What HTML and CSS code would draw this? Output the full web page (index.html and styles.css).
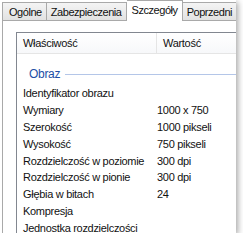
FILE: index.html
```html
<!DOCTYPE html>
<html lang="pl">
<head>
    <meta charset="UTF-8">
    <title>Właściwości</title>
    <link rel="stylesheet" href="styles.css">
</head>
<body>
    <div class="window">
        <div class="tabs">
            <div class="tab first">Ogólne</div>
            <div class="tab">Zabezpieczenia</div>
            <div class="tab selected">Szczegóły</div>
            <div class="tab">Poprzedni</div>
        </div>
        <div class="panel">
            <div class="list">
                <div class="list-header">
                    <div class="col name">Właściwość</div>
                    <div class="col value">Wartość</div>
                </div>
                <div class="group">
                    <span>Obraz</span>
                    <div class="group-line"></div>
                </div>
                <div class="row"><div class="name">Identyfikator obrazu</div><div class="value"></div></div>
                <div class="row"><div class="name">Wymiary</div><div class="value">1000 x 750</div></div>
                <div class="row"><div class="name">Szerokość</div><div class="value">1000 pikseli</div></div>
                <div class="row"><div class="name">Wysokość</div><div class="value">750 pikseli</div></div>
                <div class="row"><div class="name">Rozdzielczość w poziomie</div><div class="value">300 dpi</div></div>
                <div class="row"><div class="name">Rozdzielczość w pionie</div><div class="value">300 dpi</div></div>
                <div class="row"><div class="name">Głębia w bitach</div><div class="value">24</div></div>
                <div class="row"><div class="name">Kompresja</div><div class="value"></div></div>
                <div class="row"><div class="name">Jednostka rozdzielczości</div><div class="value"></div></div>
            </div>
        </div>
    </div>
</body>
</html>
```

FILE: styles.css
```css
body, html {
    margin: 0;
    padding: 0;
    background-color: #ffffff;
    font-family: "Liberation Sans", Arial, sans-serif;
    font-size: 11px;
    letter-spacing: -0.3px;
    color: #111111;
}
.window {
    width: 236px;
    height: 233px;
    overflow: hidden;
    background-color: #ffffff;
    box-shadow: 2px 2px 6px rgba(0, 0, 0, 0.35);
    display: flex;
    flex-direction: column;
}
.tabs {
    display: flex;
    align-items: flex-end;
    height: 21px;
    padding-left: 2px;
    flex-shrink: 0;
    position: relative;
    z-index: 1;
}
.tab {
    height: 17px;
    line-height: 18px;
    padding: 0 4px 0 4px;
    border: 1px solid #a9a9a9;
    border-bottom: none;
    border-left: none;
    background: linear-gradient(#f4f4f4, #e2e2e2);
    white-space: nowrap;
    letter-spacing: -0.45px;
    margin-bottom: 1px;
}
.tab.first {
    border-left: 1px solid #a9a9a9;
    padding: 0 4px 0 6px;
}
.tab.selected {
    height: 20px;
    line-height: 19px;
    padding: 0 4px 0 5px;
    background: #ffffff;
    margin-bottom: 0;
}
.panel {
    flex: 1;
    margin-left: 2px;
    margin-top: -1px;
    border-top: 1px solid #a9a9a9;
    border-left: 1px solid #a9a9a9;
    padding: 11px 0 0 13px;
    overflow: hidden;
}
.list {
    border-top: 1px solid #828790;
    border-left: 1px solid #828790;
    height: 300px;
}
.list-header {
    display: flex;
    height: 20px;
    border-bottom: 1px solid #e5e5e5;
    background: linear-gradient(#ffffff, #f7f8fa);
}
.list-header .col {
    line-height: 20px;
    padding-left: 6px;
}
.list-header .name {
    width: 140px;
    box-sizing: border-box;
    border-right: 1px solid #e5e5e5;
}
.group {
    display: flex;
    align-items: center;
    height: 16px;
    margin-top: 12px;
    margin-bottom: 3px;
    padding-left: 12px;
    color: #1e4fa6;
    font-size: 12px;
}
.group-line {
    flex: 1;
    height: 1px;
    margin-left: 5px;
    background-color: #b4c6e8;
}
.row {
    display: flex;
    height: 16.9px;
    line-height: 17px;
}
.row .name {
    width: 140px;
    box-sizing: border-box;
    padding-left: 6px;
    white-space: nowrap;
}
.row .value {
    white-space: nowrap;
}
```
